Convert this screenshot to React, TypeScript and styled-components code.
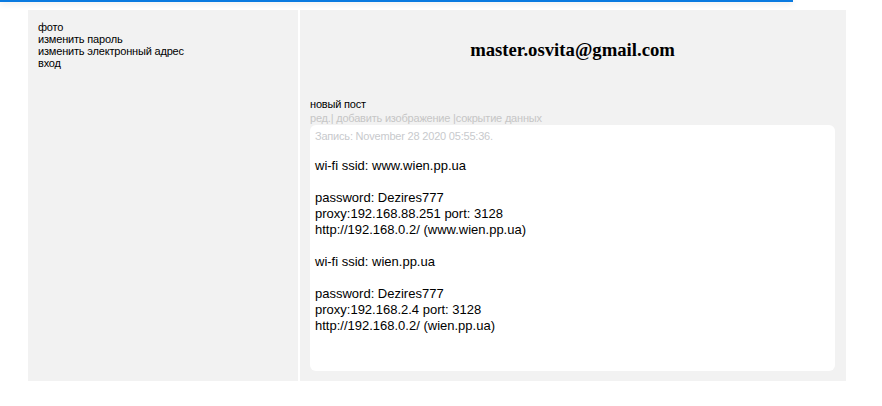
import React from "react";
import styled, { createGlobalStyle } from "styled-components";

const Global = createGlobalStyle`
  html, body { margin: 0; padding: 0; background: #fff; }
  body { font-family: "Liberation Sans", Arial, sans-serif; color: #000; }
`;

const ProgressBar = styled.div`
  position: fixed;
  top: 0;
  left: 0;
  width: 793px;
  height: 2px;
  background: #0a7ae0;
  box-shadow: 0 1px 6px rgba(0, 0, 0, 0.18);
  z-index: 10;
`;

const Page = styled.div`
  margin: 10px 0 0 28px;
  width: 818px;
  display: grid;
  grid-template-columns: 270px 546px;
  column-gap: 2px;
  background: #fff;
`;

const Sidebar = styled.nav`
  background: #f2f2f2;
  padding: 10.5px 10px;
  display: flex;
  flex-direction: column;
`;

const MenuLink = styled.a`
  font-size: 11px;
  line-height: 12px;
  letter-spacing: -0.18px;
  color: #000;
  text-decoration: none;
  cursor: pointer;
`;

const Main = styled.main`
  background: #f2f2f2;
  padding: 29px 11px 10px 10px;
  display: flex;
  flex-direction: column;
`;

const Email = styled.h3`
  margin: 0 0 36.5px;
  font-family: "Liberation Serif", "Times New Roman", serif;
  font-size: 18.72px;
  font-weight: bold;
  text-align: center;
  line-height: 21.5px;
`;

const NewPost = styled.div`
  font-size: 11px;
  line-height: 14px;
  letter-spacing: -0.18px;
`;

const Actions = styled.div`
  font-size: 11px;
  line-height: 14px;
  letter-spacing: -0.2px;
  color: #c6c6c6;
`;

const Card = styled.div`
  background: #fff;
  border-radius: 6px;
  padding: 5px;
`;

const Stamp = styled.div`
  font-size: 11px;
  line-height: 13px;
  letter-spacing: -0.2px;
  color: #c8cacd;
  margin-bottom: 15px;
`;

const Body = styled.div`
  font-size: 13px;
  line-height: 16px;
  white-space: pre-line;
`;

const text = `wi-fi ssid: www.wien.pp.ua

password: Dezires777
proxy:192.168.88.251 port: 3128
http://192.168.0.2/ (www.wien.pp.ua)

wi-fi ssid: wien.pp.ua

password: Dezires777
proxy:192.168.2.4 port: 3128
http://192.168.0.2/ (wien.pp.ua)
\u00a0
\u00a0`;

export default function App() {
  return (
    <>
      <Global />
      <ProgressBar />
      <Page>
        <Sidebar>
          <MenuLink>фото</MenuLink>
          <MenuLink>изменить пароль</MenuLink>
          <MenuLink>изменить электронный адрес</MenuLink>
          <MenuLink>вход</MenuLink>
        </Sidebar>
        <Main>
          <Email>master.osvita@gmail.com</Email>
          <NewPost>новый пост</NewPost>
          <Actions>ред.| добавить изображение |сокрытие данных</Actions>
          <Card>
            <Stamp>Запись: November 28 2020 05:55:36.</Stamp>
            <Body>{text}</Body>
          </Card>
        </Main>
      </Page>
    </>
  );
}
